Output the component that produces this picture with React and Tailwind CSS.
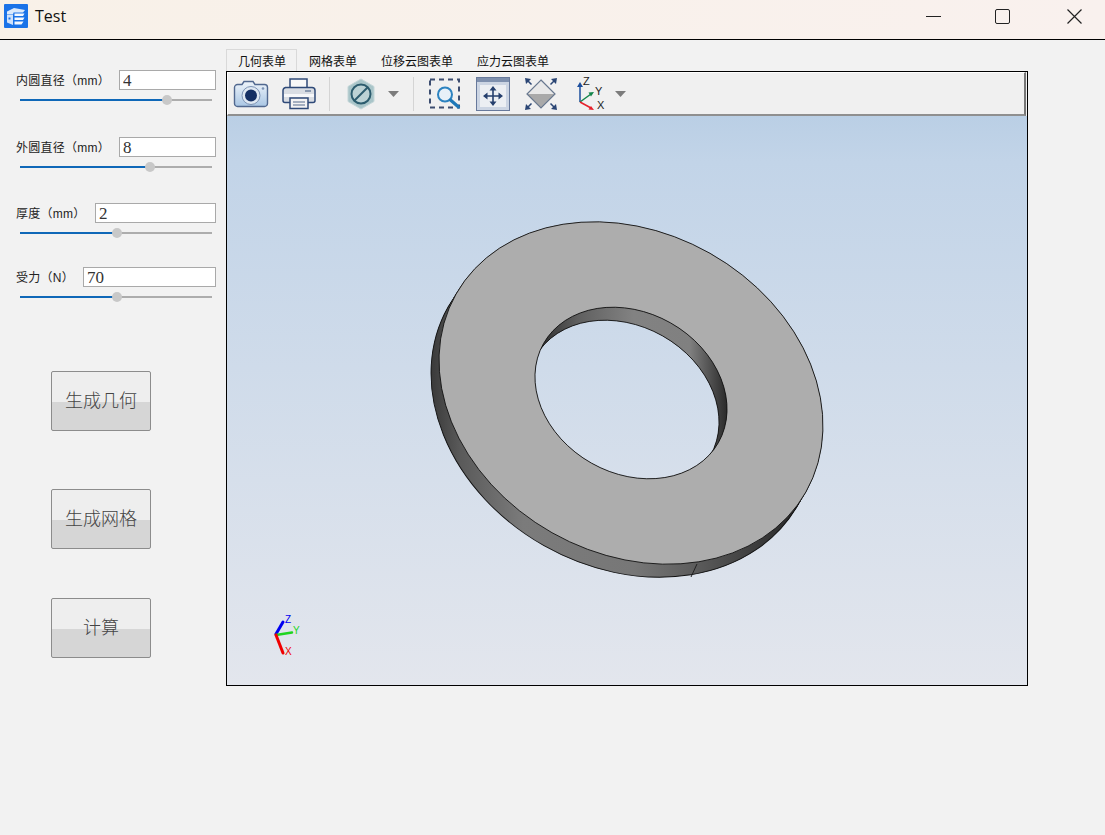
const fonts = "font-['Liberation_Sans','Noto_Sans_CJK_SC',sans-serif]";

const params = [
  { label: "内圆直径（mm）", value: "4", inputW: "w-[97px]", top: "mt-[30px]", thumb: 147 },
  { label: "外圆直径（mm）", value: "8", inputW: "w-[97px]", top: "mt-[32px]", thumb: 130 },
  { label: "厚度（mm）", value: "2", inputW: "w-[121px]", top: "mt-[31px]", thumb: 97 },
  { label: "受力（N）", value: "70", inputW: "w-[133px]", top: "mt-[29px]", thumb: 97 },
];

const actions = [
  { label: "生成几何", top: "mt-[69px]" },
  { label: "生成网格", top: "mt-[58px]" },
  { label: "计算", top: "mt-[49px]" },
];

const tabs = ["几何表单", "网格表单", "位移云图表单", "应力云图表单"];

function ParamRow({ label, value, inputW, top, thumb }) {
  return (
    <div className={top}>
      <div className="flex h-5 items-center justify-between pl-4 pr-[10px]">
        <span className="translate-y-[1px] text-[12px] leading-5 tracking-[0.25px] text-[#222]">{label}</span>
        <input
          readOnly
          value={value}
          className={`${inputW} h-5 border border-[#a9a9a9] bg-white px-[3px] pt-[2px] font-['Liberation_Serif',serif] text-[17px] leading-none text-[#333] outline-none`}
        />
      </div>
      <div className="relative mt-[5px] ml-5 h-[10px] w-[192px]">
        <div className="absolute inset-x-0 top-1 h-[2px] bg-[#adadad]" />
        <div className="absolute left-0 top-1 h-[2px] bg-[#0f68b8]" style={{ width: thumb }} />
        <div
          className="absolute top-0 size-[10px] -translate-x-1/2 rounded-full bg-[#c8c8c8]"
          style={{ left: thumb }}
        />
      </div>
    </div>
  );
}

function ActionButton({ label, top }) {
  return (
    <button
      className={`${top} ml-[51px] flex h-[60px] w-[100px] items-center justify-center rounded-[2px] border border-[#8c8c8c] bg-[linear-gradient(#eeeeee_52%,#d6d6d6_52%)] pt-[1px] text-[18px] font-light text-[#444]`}
    >
      {label}
    </button>
  );
}

function TitleLogo() {
  return (
    <svg width="24" height="24" viewBox="0 0 24 24" className="ml-1">
      <rect width="24" height="24" rx="1" fill="#1a73e8" />
      <path d="M3 7.500l7-3.500 11 2-2 2.500H9.500L9 10.500H3z" fill="#dbe9fb" />
      <path d="M3 11h6v10l-6-2.500z" fill="#cfe2fb" />
      <rect x="4.500" y="13.500" width="2" height="2" fill="#1a73e8" />
      <path d="M10.500 9.500h10l-1.500 2.500h-8.500zM10.500 13.500h10l-1.500 2.500h-8.500zM10.500 17.500h9l-2 3h-7z" fill="#f4f8fe" />
    </svg>
  );
}

function CameraIcon() {
  return (
    <svg width="36" height="28" viewBox="0 0 36 28" className="ml-[5px]">
      <defs>
        <linearGradient id="cam" x1="0" y1="0" x2="0" y2="1">
          <stop offset="0" stopColor="#eef4fa" />
          <stop offset="1" stopColor="#a9c6e4" />
        </linearGradient>
      </defs>
      <path d="M9 4.500l2-3h9l2 3h9.500a3 3 0 0 1 3 3v16a3 3 0 0 1-3 3h-27a3 3 0 0 1-3-3v-16a3 3 0 0 1 3-3z" fill="url(#cam)" stroke="#51688f" strokeWidth="1.400" />
      <circle cx="18" cy="15.500" r="9" fill="#dfe8f2" stroke="#7d93b4" />
      <circle cx="18" cy="15.500" r="6" fill="#152f63" />
      <circle cx="30" cy="8.500" r="1.300" fill="#7d93b4" />
    </svg>
  );
}

function PrinterIcon() {
  return (
    <svg width="34" height="33" viewBox="0 0 34 33" className="ml-[13px]">
      <path d="M8 11V2h17v9" fill="#f8f8f8" stroke="#2f4a78" strokeWidth="1.500" />
      <path d="M3 10.500h27a3 3 0 0 1 3 3v10a2 2 0 0 1-2 2H3a2 2 0 0 1-2-2v-10a3 3 0 0 1 3-3z" fill="#d9dde3" stroke="#2f4a78" strokeWidth="1.500" />
      <rect x="2" y="17" width="30" height="3" fill="#f6f7f9" />
      <rect x="23" y="13" width="6" height="2" fill="#8a99b0" />
      <path d="M8 21h18v10.500H8z" fill="#f3f3f3" stroke="#2f4a78" strokeWidth="1.500" />
      <path d="M11 25h12M11 28h12" stroke="#8a99b0" strokeWidth="1.300" />
    </svg>
  );
}

function NoShowIcon() {
  return (
    <svg width="28" height="32" viewBox="0 0 28 32" className="ml-[17px]">
      <path d="M14 1l13 7.500v15L14 31 1 23.500v-15z" fill="#a9c5c9" stroke="#c4d6d8" />
      <circle cx="14" cy="16" r="9.500" fill="#bcd2d5" stroke="#2c5c6e" strokeWidth="2" />
      <path d="M7.500 22.500l13-13" stroke="#2c5c6e" strokeWidth="2" />
    </svg>
  );
}

function ZoomWindowIcon() {
  return (
    <svg width="33" height="32" viewBox="0 0 33 32" className="ml-[15px]">
      <rect x="1" y="1.500" width="29" height="28" fill="none" stroke="#3c4d70" strokeWidth="2" strokeDasharray="5 4" />
      <circle cx="16" cy="16.500" r="7" fill="#e7f0f8" stroke="#2d83c0" strokeWidth="2" />
      <path d="M21.500 22l8 7" stroke="#1e78b8" strokeWidth="3.200" strokeLinecap="round" />
    </svg>
  );
}

function FitIcon() {
  return (
    <svg width="34" height="34" viewBox="0 0 34 34" className="ml-[14px]">
      <rect x="0.500" y="0.500" width="33" height="33" fill="#ccd5e3" stroke="#67799b" />
      <rect x="1" y="1" width="32" height="4" fill="#7e90ae" />
      <rect x="4" y="8" width="26" height="22" fill="#eceff3" />
      <path d="M17 11v16M9 19h16" stroke="#26406e" strokeWidth="1.600" />
      <path d="M17 9l-3.500 4.500h7zM17 29l-3.500-4.500h7zM7 19l4.500-3.500v7zM27 19l-4.500-3.500v7z" fill="#26406e" />
    </svg>
  );
}

function DiamondIcon() {
  return (
    <svg width="32" height="32" viewBox="0 0 32 32" className="ml-[15px]">
      <path d="M16 2l14 14H2z" fill="#e8e8e8" />
      <path d="M2 16h28L16 30z" fill="#a9a9a9" />
      <path d="M16 2l14 14-14 14L2 16z" fill="none" stroke="#68788f" strokeWidth="1.200" />
      <path d="M0 0l6 1-5 5zM32 0l-6 1 5 5zM0 32l6-1-5-5zM32 32l-6-1 5-5z" fill="#2b4675" />
      <path d="M3 3l3.500 3.500M29 3l-3.500 3.500M3 29l3.500-3.500M29 29l-3.500-3.500" stroke="#2b4675" strokeWidth="1.500" />
    </svg>
  );
}

function AxesIcon() {
  return (
    <svg width="30" height="38" viewBox="0 -4 30 38" className="-mt-[4px] ml-[20px]">
      <path d="M3 25V8" stroke="#1c4f9e" strokeWidth="1.500" />
      <path d="M3 5l-3 5h6z" fill="#1c4f9e" />
      <path d="M3 25l11-8" stroke="#12854a" strokeWidth="1.500" />
      <path d="M17 15l-5.500.5 2.500 4z" fill="#12854a" />
      <path d="M3 25l11 6" stroke="#e5202a" strokeWidth="1.500" />
      <path d="M17 33l-5.500-.5 2.500-3.500z" fill="#e5202a" />
      <text x="6" y="8" fontSize="11" fill="#222" fontFamily="Liberation Sans">Z</text>
      <text x="18" y="18" fontSize="11" fill="#222" fontFamily="Liberation Sans">Y</text>
      <text x="20" y="32" fontSize="11" fill="#222" fontFamily="Liberation Sans">X</text>
    </svg>
  );
}

function Caret({ className }) {
  return (
    <svg width="11" height="6" viewBox="0 0 11 6" className={className}>
      <path d="M0 0h11L5.500 6z" fill="#7c7c7c" />
    </svg>
  );
}

function Toolbar() {
  return (
    <div className="mr-px flex h-11 items-center border-t border-r-2 border-b-2 border-l border-t-white border-r-[#777] border-b-[#8f8f8f] border-l-white bg-[#f0f0f0]">
      <CameraIcon />
      <PrinterIcon />
      <div className="ml-[13px] h-[34px] w-px bg-[#d4d4d4]" />
      <NoShowIcon />
      <Caret className="ml-[13px]" />
      <div className="ml-[14px] h-[34px] w-px bg-[#d4d4d4]" />
      <ZoomWindowIcon />
      <FitIcon />
      <DiamondIcon />
      <AxesIcon />
      <Caret className="ml-[8px]" />
    </div>
  );
}

// ring path: outer and inner rotated ellipses, centred on cx, cy
function ringPath(cx, cy) {
  const ell = (a, b) =>
    `M${cx - a * 0.8704} ${cy - a * 0.4924}A${a} ${b} 29.500 1 0 ${cx + a * 0.8704} ${cy + a * 0.4924}A${a} ${b} 29.500 1 0 ${cx - a * 0.8704} ${cy - a * 0.4924}Z`;
  return ell(201, 160.500) + ell(100.500, 80.500);
}

function holeEllipse(cx, cy) {
  return { cx, cy, rx: 100.500, ry: 80.500, transform: `rotate(29.500 ${cx} ${cy})` };
}

function Washer() {
  const cx = 631;
  const cy = 393;
  const steps = Array.from({ length: 15 }, (_, i) => 14 - i);
  return (
    <svg viewBox="227 116 800 569" className="block h-full w-full">
      <defs>
        <linearGradient id="outerWall" gradientUnits="userSpaceOnUse" x1="431" y1="0" x2="800" y2="0">
          <stop offset="0" stopColor="#3a3a3a" />
          <stop offset="0.08" stopColor="#5a5a5a" />
          <stop offset="0.25" stopColor="#7b7b7b" />
          <stop offset="0.55" stopColor="#777" />
          <stop offset="0.7" stopColor="#5f5f5f" />
          <stop offset="1" stopColor="#262626" />
        </linearGradient>
        <linearGradient id="innerWall" gradientUnits="userSpaceOnUse" x1="540" y1="0" x2="727" y2="0">
          <stop offset="0" stopColor="#2e2e2e" />
          <stop offset="0.2" stopColor="#5f5f5f" />
          <stop offset="0.5" stopColor="#828282" />
          <stop offset="0.8" stopColor="#808080" />
          <stop offset="1" stopColor="#2a2a2a" />
        </linearGradient>
        <clipPath id="holeClip">
          <ellipse {...holeEllipse(cx, cy)} />
        </clipPath>
      </defs>

      {/* extruded side, stacked from the bottom face up */}
      {steps.map((i) => (
        <path
          key={i}
          d={ringPath(cx - (i * 8) / 14, cy + (i * 13) / 14)}
          fill="url(#outerWall)"
          fillRule="evenodd"
        />
      ))}
      <ellipse cx={cx - 8} cy={cy + 13} rx="201" ry="160.500" transform={`rotate(29.500 ${cx - 8} ${cy + 13})`} fill="none" stroke="#111" strokeWidth="0.900" />

      <path d={ringPath(cx, cy)} fill="#adadad" fillRule="evenodd" />

      {/* inner wall seen through the hole */}
      <g clipPath="url(#holeClip)">
        <path
          d={`M400 200H860V600H400Z${ringPath(cx - 8, cy + 13).slice(ringPath(cx - 8, cy + 13).indexOf("Z") + 1)}`}
          fill="url(#innerWall)"
          fillRule="evenodd"
          stroke="#111"
          strokeWidth="0.900"
        />
      </g>

      <path d={ringPath(cx, cy)} fill="none" stroke="#111" strokeWidth="0.900" />
      <path d="M697 564l-6 13" stroke="#222" strokeWidth="1" />

      {/* corner triad */}
      <path d="M276 634l7-12" stroke="#0000f0" strokeWidth="3" strokeLinecap="round" />
      <path d="M276 635l16-2.500" stroke="#1fd51f" strokeWidth="2.500" strokeLinecap="round" />
      <path d="M276 635l7 18" stroke="#f00000" strokeWidth="3" strokeLinecap="round" />
      <text x="285" y="623" fontSize="10" fill="#0000f0" fontFamily="Liberation Sans">Z</text>
      <text x="293" y="634" fontSize="10" fill="#1fd51f" fontFamily="Liberation Sans">Y</text>
      <text x="285" y="655" fontSize="10" fill="#f00000" fontFamily="Liberation Sans">X</text>
    </svg>
  );
}

export default function App() {
  return (
    <div className={`flex h-[835px] w-[1105px] flex-col overflow-hidden bg-[#f2f2f2] ${fonts}`}>
      {/* Title bar */}
      <header className="flex h-10 shrink-0 items-center border-b border-black bg-[linear-gradient(90deg,#f8f1e8,#f9f1ee)] pr-[23px] pb-[7px]">
        <TitleLogo />
        <span className="ml-[7px] font-['Open_Sans',sans-serif] text-[16px] text-[#111]">Test</span>
        <div className="ml-auto flex items-center">
          <div className="h-px w-[15px] bg-[#222]" />
          <div className="ml-[54px] size-[15px] rounded-[2px] border-[1.500px] border-[#222]" />
          <svg width="15" height="15" viewBox="0 0 15 15" className="ml-[57px]">
            <path d="M0.500 0.500l14 14M14.500 0.500l-14 14" stroke="#222" strokeWidth="1.200" />
          </svg>
        </div>
      </header>

      <div className="flex flex-1">
        {/* Parameter column */}
        <aside className="flex w-[226px] shrink-0 flex-col">
          {params.map((p) => (
            <ParamRow key={p.label} {...p} />
          ))}
          {actions.map((a) => (
            <ActionButton key={a.label} {...a} />
          ))}
        </aside>

        {/* Tabs and viewer */}
        <main className="mt-[9px] flex flex-col">
          <div className="flex h-[22px] items-stretch">
            {tabs.map((t, i) => (
              <div
                key={t}
                className={
                  i === 0
                    ? "border border-b-0 border-[#d9d9d9] pt-[2px] pr-[10px] pl-[11px] text-[12px] leading-5 text-[#111]"
                    : "px-3 pt-[3px] text-[12px] leading-5 text-[#111]"
                }
              >
                {t}
              </div>
            ))}
          </div>
          <div className="flex h-[615px] w-[802px] flex-col border border-black">
            <Toolbar />
            <div className="flex-1 bg-[linear-gradient(#bacfe5,#c2d4e8_8%,#e3e6ed)]">
              <Washer />
            </div>
          </div>
        </main>
      </div>
    </div>
  );
}
